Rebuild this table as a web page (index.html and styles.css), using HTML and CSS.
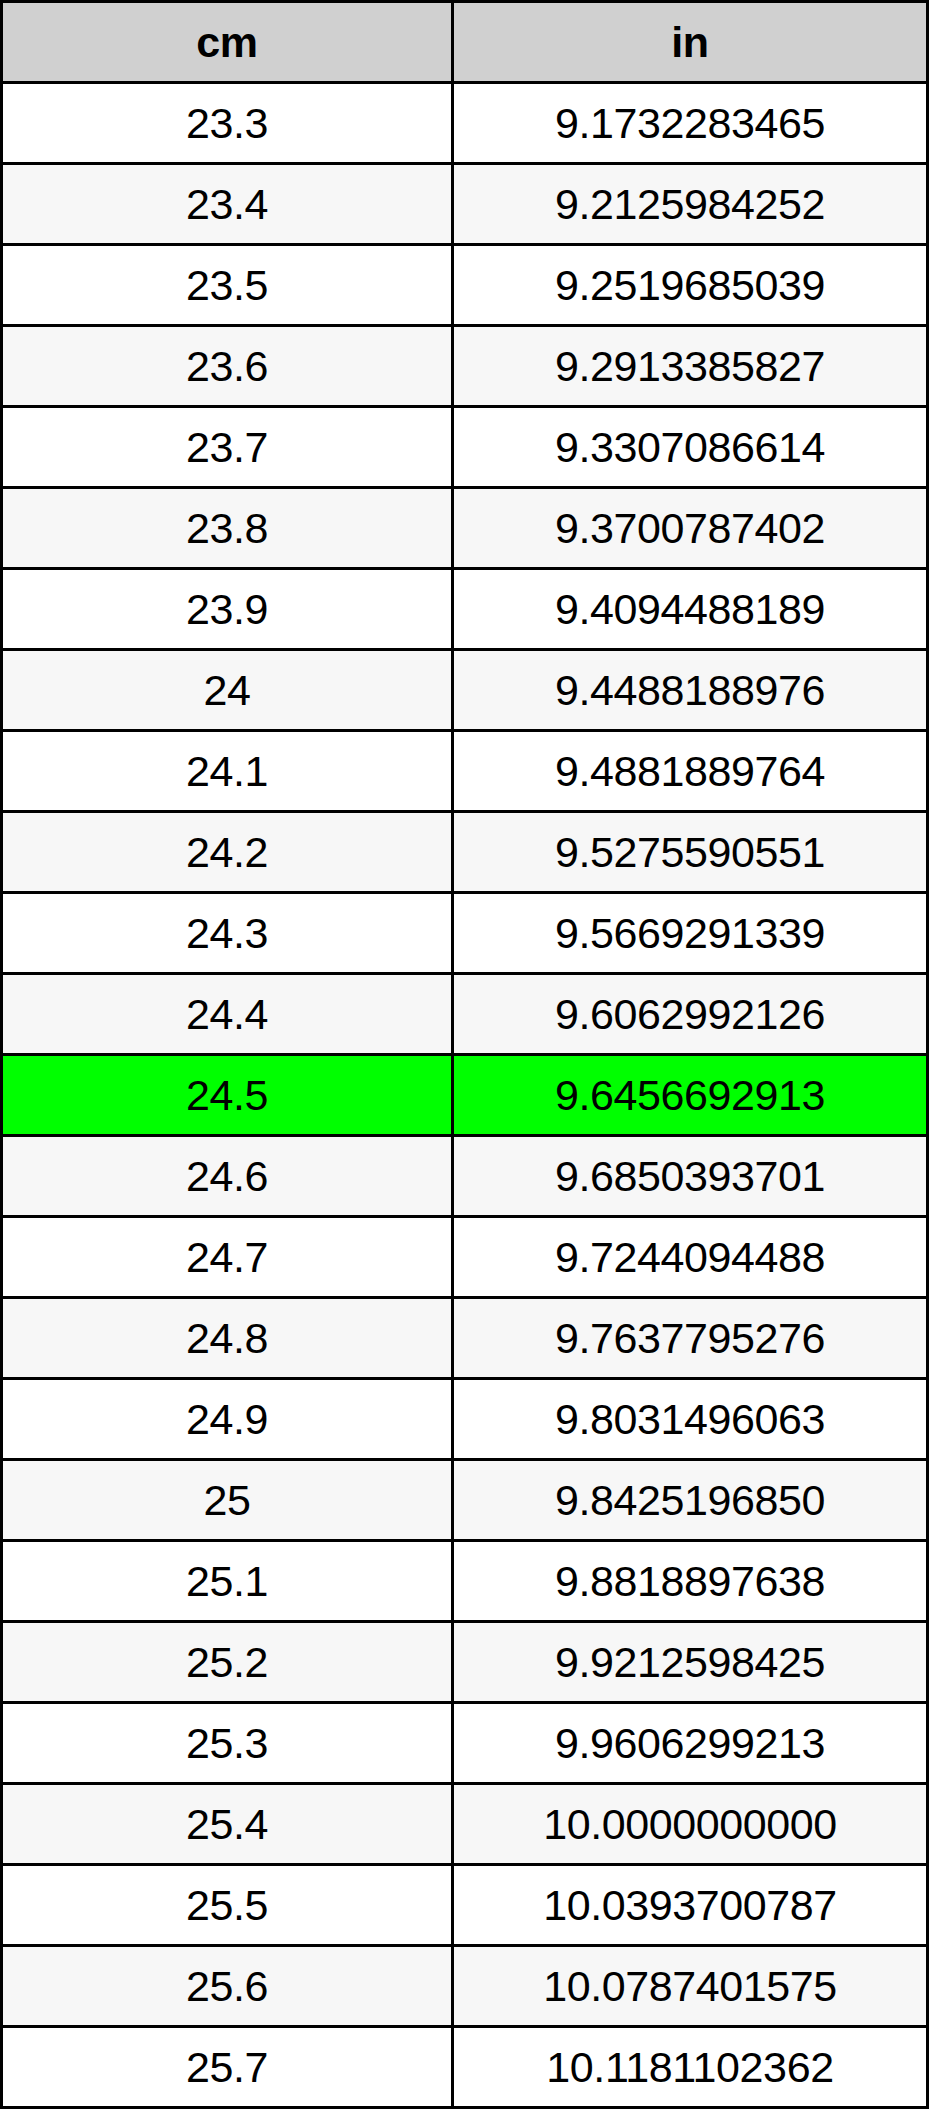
FILE: index.html
```html
<!DOCTYPE html>
<html>
<head>
<meta charset="utf-8">
<link rel="stylesheet" href="styles.css">
</head>
<body>
<table class="conv">
<thead>
<tr><th class="c1">cm</th><th class="c2">in</th></tr>
</thead>
<tbody>
<tr><td>23.3</td><td>9.1732283465</td></tr>
<tr><td>23.4</td><td>9.2125984252</td></tr>
<tr><td>23.5</td><td>9.2519685039</td></tr>
<tr><td>23.6</td><td>9.2913385827</td></tr>
<tr><td>23.7</td><td>9.3307086614</td></tr>
<tr><td>23.8</td><td>9.3700787402</td></tr>
<tr><td>23.9</td><td>9.4094488189</td></tr>
<tr><td>24</td><td>9.4488188976</td></tr>
<tr><td>24.1</td><td>9.4881889764</td></tr>
<tr><td>24.2</td><td>9.5275590551</td></tr>
<tr><td>24.3</td><td>9.5669291339</td></tr>
<tr><td>24.4</td><td>9.6062992126</td></tr>
<tr class="hl"><td>24.5</td><td>9.6456692913</td></tr>
<tr><td>24.6</td><td>9.6850393701</td></tr>
<tr><td>24.7</td><td>9.7244094488</td></tr>
<tr><td>24.8</td><td>9.7637795276</td></tr>
<tr><td>24.9</td><td>9.8031496063</td></tr>
<tr><td>25</td><td>9.8425196850</td></tr>
<tr><td>25.1</td><td>9.8818897638</td></tr>
<tr><td>25.2</td><td>9.9212598425</td></tr>
<tr><td>25.3</td><td>9.9606299213</td></tr>
<tr><td>25.4</td><td>10.0000000000</td></tr>
<tr><td>25.5</td><td>10.0393700787</td></tr>
<tr><td>25.6</td><td>10.0787401575</td></tr>
<tr><td>25.7</td><td>10.1181102362</td></tr>
</tbody>
</table>
</body>
</html>
```
FILE: styles.css
```css
html, body {
  margin: 0;
  padding: 0;
  background: #ffffff;
}

.conv {
  table-layout: fixed;
  width: 929px;
  border-collapse: separate;
  border-spacing: 0;
  border-top: 3px solid #000;
  border-left: 3px solid #000;
  font-family: "Liberation Sans", Arial, sans-serif;
  font-size: 43px;
  letter-spacing: -0.4px;
  color: #000;
}

.conv th,
.conv td {
  padding: 0;
  line-height: 78px;
  text-align: center;
  border-right: 3px solid #000;
  border-bottom: 3px solid #000;
  white-space: nowrap;
}

.conv th {
  background: #d0d0d0;
  font-weight: bold;
}

.conv .c1 {
  width: 448px;
}

.conv .c2 {
  width: 472px;
}

.conv tbody tr:nth-child(odd) td {
  background: #ffffff;
}

.conv tbody tr:nth-child(even) td {
  background: #f7f7f7;
}

.conv tbody tr.hl td {
  background: #00ff00;
}
```
